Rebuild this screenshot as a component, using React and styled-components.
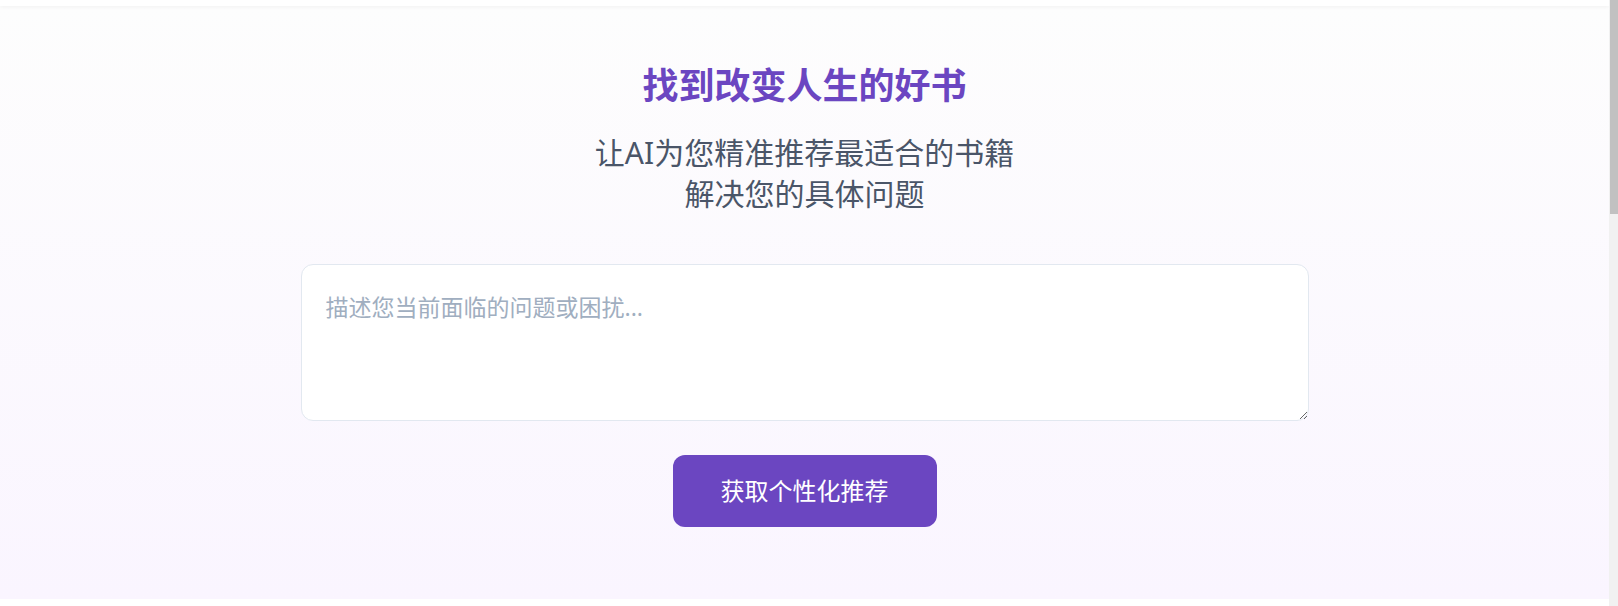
import React, { useState } from 'react';
import styled, { createGlobalStyle } from 'styled-components';

const GlobalStyle = createGlobalStyle`
  html, body {
    margin: 0;
    padding: 0;
    height: 100%;
    overflow: hidden;
  }
  body {
    font-family: "Noto Sans", "Noto Sans CJK SC", sans-serif;
    background: #ffffff;
  }
  * { box-sizing: border-box; }
`;

// 视口高度 / 文档高度，用来画右侧滚动条的滑块
const VIEW_HEIGHT = 606;
const DOC_HEIGHT = 1716;

const App = () => {
  const [problem, setProblem] = useState('');

  return (
    <Page>
      <GlobalStyle />
      <Main>
        <TopBar />
        <Hero>
          <Title>找到改变人生的好书</Title>
          <Subtitle>
            让AI为您精准推荐最适合的书籍
            <br />
            解决您的具体问题
          </Subtitle>
          <ProblemInput
            placeholder="描述您当前面临的问题或困扰..."
            value={problem}
            onChange={(e) => setProblem(e.target.value)}
          />
          <SubmitButton>获取个性化推荐</SubmitButton>
        </Hero>
        {/* 下方内容区（首屏之外） */}
        <BelowFold />
      </Main>
      <ScrollRail>
        <ScrollThumb style={{ height: `${(VIEW_HEIGHT / DOC_HEIGHT) * 100}%` }} />
      </ScrollRail>
    </Page>
  );
};

// ─── 样式 ─────────────────────────────────────────────

const Page = styled.div`
  display: flex;
  height: 100vh;
  overflow: hidden;
`;

const Main = styled.main`
  flex: 1;
  min-width: 0;
  overflow: hidden;
`;

const ScrollRail = styled.div`
  width: 9px;
  flex-shrink: 0;
  background: #f1f1f1;
  padding-left: 1px;
`;

const ScrollThumb = styled.div`
  width: 100%;
  background: #c1c1c1;
`;

const TopBar = styled.header`
  height: 6px;
  background: #ffffff;
  box-shadow: 0 1px 4px rgba(0, 0, 0, 0.05);
  position: relative;
  z-index: 1;
`;

const Hero = styled.section`
  display: flex;
  flex-direction: column;
  align-items: center;
  padding: 60px 24px 72px;
  background: linear-gradient(180deg, #fdfdfd 0%, #faf5ff 100%);
`;

const Title = styled.h1`
  margin: 0 0 26px;
  font-size: 36px;
  line-height: 40px;
  font-weight: 700;
  color: #6b46c1;
  text-align: center;
`;

const Subtitle = styled.p`
  margin: 0 0 50px;
  font-size: 30px;
  line-height: 41px;
  color: #4a5568;
  text-align: center;
`;

const ProblemInput = styled.textarea`
  display: block;
  width: 100%;
  max-width: 1008px;
  height: 157px;
  padding: 24px;
  border: 1px solid #e2e8f0;
  border-radius: 12px;
  background: #ffffff;
  font-family: inherit;
  font-size: 23px;
  line-height: 36px;
  color: #2d3748;
  resize: vertical;

  &::placeholder {
    color: #a0aec0;
  }

  &:focus {
    outline: none;
    border-color: #b794f4;
  }
`;

const SubmitButton = styled.button`
  margin-top: 34px;
  padding: 20px 48px;
  border: none;
  border-radius: 12px;
  background: #6b46c1;
  color: #ffffff;
  font-family: inherit;
  font-size: 24px;
  line-height: 32px;
  cursor: pointer;

  &:hover {
    background: #553c9a;
  }
`;

const BelowFold = styled.section`
  min-height: 1110px;
  background: #ffffff;
`;

export default App;
